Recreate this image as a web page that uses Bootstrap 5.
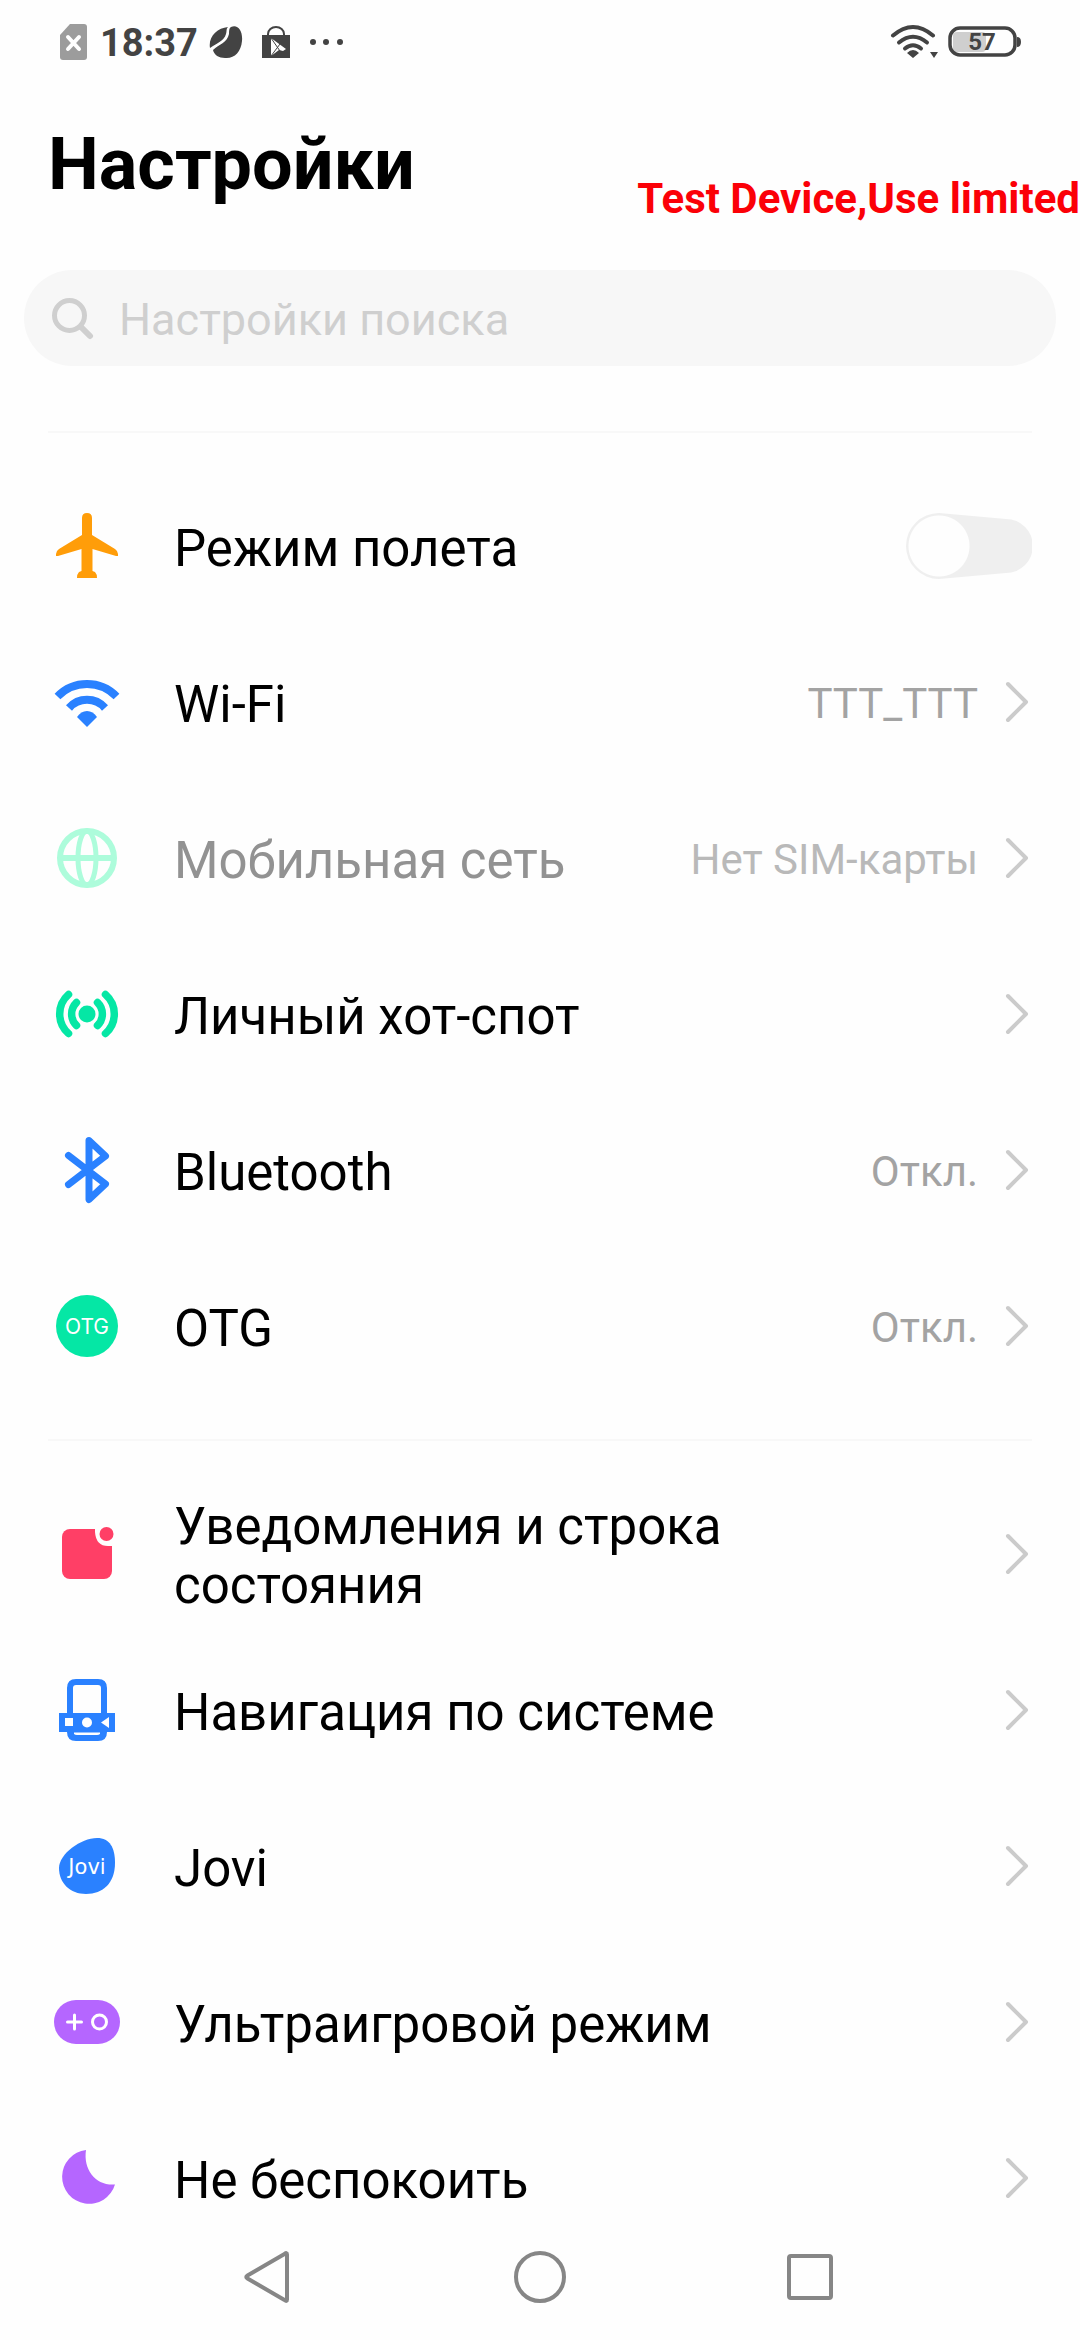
<!DOCTYPE html>
<html lang="ru">
<head>
<meta charset="utf-8">
<meta name="viewport" content="width=device-width, initial-scale=1">
<title>Настройки</title>
<link href="https://cdn.jsdelivr.net/npm/bootstrap@5.3.0/dist/css/bootstrap.min.css" rel="stylesheet">
<style>
  body { font-family: Roboto, "Noto Sans", sans-serif; background: #fefefe; color: #000; }
  svg { display: block; flex: none; }
  .status-bar { height: 84px; padding: 0 58px 0 60px; color: #434343; }
  .status-time { font-size: 38px; line-height: 48px; font-weight: 700; margin: 0 11px 0 13px; padding-top: 2px; }
  .page-head { height: 162px; padding: 0 48px; }
  .page-head h1 { font-size: 72px; line-height: 84px; font-weight: 700; }
  .watermark { top: 174px; right: 0; font-size: 42px; line-height: 50px; font-weight: 700; color: #fb0007; }
  .search-box { height: 96px; margin: 24px 24px 65px; padding: 0 26px; background: #f7f7f7; }
  .search-box input, .search-box input:focus { font-size: 45px; line-height: 54px; padding: 4px 0 0 25px; background: transparent; color: #000; box-shadow: none; }
  .search-box input::placeholder { color: #cfcfcf; opacity: 1; }
  .settings-group { margin: 0 48px; padding: 35px 0; border-top: 2px solid #f8f8f8; }
  .setting { min-height: 156px; color: #000; text-decoration: none; }
  .setting-label { font-size: 51px; line-height: 59px; margin-left: 48px; padding-top: 4px; max-width: 600px; }
  .setting-value { font-size: 42px; line-height: 50px; margin-right: 24px; padding-top: 4px; color: #a3a3a3; }
  .setting.is-off .setting-label { color: #929292; }
  .setting.is-off .setting-value { color: #b9b9b9; }
  .setting .form-check-input { width: 126px; height: 66px; margin: 0; border: 0; border-radius: 0;
    background: radial-gradient(circle at 33px 33px, #fefefe 30px, #efefef 31px);
    clip-path: path("M33 0 L100 6 A27 27 0 0 1 100 60 L33 66 A33 33 0 0 1 33 0 Z"); }
  .nav-keys { height: 126px; background: #fefefe; }
  .chev { fill: none; stroke: #cbcbcb; stroke-width: 4; stroke-linecap: round; stroke-linejoin: round; }
  .key-shape { fill: none; stroke: #868686; stroke-width: 4; stroke-linejoin: round; }
  .otg-mark { font: 21px Inter, sans-serif; }
  .jovi-mark { font: 21px "DejaVu Sans", sans-serif; }
</style>
<script src="https://cdn.jsdelivr.net/npm/bootstrap@5.3.0/dist/js/bootstrap.bundle.min.js"></script>
</head>
<body>
<svg class="d-none" aria-hidden="true"><symbol id="chevron" viewBox="0 0 30 42"><path class="chev" d="M6 3l18 18L6 39"/></symbol></svg>

<div class="status-bar d-flex align-items-center">
  <svg width="27" height="36" viewBox="0 0 27 36"><path fill="#9c9c9c" d="M10 0h14q3 0 3 3v30q0 3-3 3H3q-3 0-3-3V11Z"/><path stroke="#fff" stroke-width="4" stroke-linecap="round" d="M8 13l11 12M19 13L8 25"/></svg>
  <span class="status-time">18:37</span>
  <svg width="34" height="34" viewBox="0 0 34 34" fill="#434343"><path d="M19 2C8 3-1 12 1 23 8 18 15 16 17 9 18 6 17 4 19 2Z"/><path d="M22 2C29-1 34 6 33 16 32 27 25 34 16 33 10 33 5 30 4 25 10 19 18 18 20 9 20 6 20 3 22 2Z"/></svg>
  <svg class="ms-3" width="34" height="34" viewBox="0 0 34 34"><path fill="#434343" d="M3 10h28v23H3Z"/><path fill="none" stroke="#434343" stroke-width="2" d="M9 12V9a8 7 0 0 1 16 0v3"/><path fill="#fefefe" d="M12 13l15 11-3 2-4-1-8 6Z"/><path stroke="#434343" d="M12 13l9 13M12 31l9-12"/></svg>
  <svg class="ms-3" width="36" height="8" viewBox="0 0 36 8" fill="#434343"><circle cx="4" cy="4" r="3"/><circle cx="17" cy="4" r="3"/><circle cx="31" cy="4" r="3"/></svg>
  <svg class="ms-auto" width="48" height="36" viewBox="0 0 48 36"><g fill="none" stroke="#434343" stroke-width="4" stroke-linecap="round"><path d="M3 11.500Q23 -5.500 43 11.500"/><path d="M9 18.500Q23 7 37 18.500"/><path d="M15 24.500Q23 18 31 24.500"/></g><path fill="#434343" d="M17 29Q23 23 29 29L23 34ZM40 28h8l-4 6Z"/></svg>
  <svg class="ms-2" width="76" height="32" viewBox="0 0 76 32"><rect x="7" y="6" width="33" height="20" rx="4" fill="#cfcfcf"/><rect x="4" y="2" width="65" height="27" rx="10" fill="none" stroke="#434343" stroke-width="3.500"/><path d="M71 11q4 0 4 5t-4 5Z" fill="#434343"/><text x="36" y="24" text-anchor="middle" font-size="24" font-weight="700" fill="#434343">57</text></svg>
</div>

<header class="page-head d-flex align-items-center"><h1 class="m-0">Настройки</h1></header>
<div class="watermark position-absolute">Test Device,Use limited</div>

<form class="search-box d-flex align-items-center rounded-pill" role="search">
  <label for="q"><svg width="44" height="44" viewBox="0 0 44 44" fill="none" stroke="#cfcfcf" stroke-linecap="round" role="img" aria-label="Поиск"><circle cx="19.500" cy="19.500" r="15" stroke-width="5"/><path d="M31 31l9 9" stroke-width="6"/></svg></label>
  <input id="q" type="search" class="form-control border-0" placeholder="Настройки поиска">
</form>

<main>
  <section class="settings-group">
    <div class="setting d-flex align-items-center">
      <svg width="78" height="78" viewBox="0 0 78 78"><path fill="#ff9d09" d="M34 11Q34 6 39 6t5 5V28L67 42Q70 44 70 47V49H68L44.500 42V64L47 65Q49 67 49 71H29Q29 67 31 65L33.500 64V42L10 49H8V47Q8 44 11 42L34 28Z"/></svg>
      <label class="setting-label" for="air">Режим полета</label>
      <input id="air" type="checkbox" role="switch" class="form-check-input ms-auto">
    </div>
    <a href="#" class="setting d-flex align-items-center">
      <svg width="78" height="78" viewBox="0 0 78 78"><g fill="none" stroke="#2a81ff" stroke-width="8" stroke-linejoin="round"><path d="M9.500 33.500A41 41 0 0 1 68.500 33.500"/><path d="M21 45A24 24 0 0 1 57 45"/></g><path fill="#2a81ff" d="M29 54Q33 48 39 48t10 6L39 64Z"/></svg>
      <span class="setting-label">Wi-Fi</span><span class="setting-value ms-auto">TTT_TTT</span><svg width="30" height="42"><use href="#chevron"/></svg>
    </a>
    <a href="#" class="setting is-off d-flex align-items-center" aria-disabled="true">
      <svg width="78" height="78" viewBox="0 0 78 78" fill="none" stroke="#adfcdb" stroke-width="6"><circle cx="39" cy="39" r="27"/><ellipse cx="39" cy="39" rx="9" ry="27" stroke-width="5"/><path d="M12 39h54"/></svg>
      <span class="setting-label">Мобильная сеть</span><span class="setting-value ms-auto">Нет SIM-карты</span><svg width="30" height="42"><use href="#chevron"/></svg>
    </a>
    <a href="#" class="setting d-flex align-items-center">
      <svg width="78" height="78" viewBox="0 0 78 78"><circle cx="39" cy="39" r="8.500" fill="#05e7a5"/><g fill="none" stroke="#05e7a5" stroke-width="7.500" stroke-linecap="round"><path d="M20.500 19.500A26 26 0 0 0 20.500 58.500M57.500 19.500A26 26 0 0 1 57.500 58.500"/><path d="M28.500 27.500A16 16 0 0 0 28.500 50.500M49.500 27.500A16 16 0 0 1 49.500 50.500"/></g></svg>
      <span class="setting-label">Личный хот-спот</span><svg class="ms-auto" width="30" height="42"><use href="#chevron"/></svg>
    </a>
    <a href="#" class="setting d-flex align-items-center">
      <svg width="78" height="78" viewBox="0 0 78 78"><path fill="none" stroke="#2a81ff" stroke-width="7" stroke-linecap="round" stroke-linejoin="round" d="M20.500 24.500L57.500 53 41 68.500V9.500L57.500 25 20.500 53.500"/></svg>
      <span class="setting-label">Bluetooth</span><span class="setting-value ms-auto">Откл.</span><svg width="30" height="42"><use href="#chevron"/></svg>
    </a>
    <a href="#" class="setting d-flex align-items-center">
      <svg width="78" height="78" viewBox="0 0 78 78"><circle cx="39" cy="39" r="31" fill="#05e7a5"/><text class="otg-mark" x="39" y="47" text-anchor="middle" fill="#fff">OTG</text></svg>
      <span class="setting-label">OTG</span><span class="setting-value ms-auto">Откл.</span><svg width="30" height="42"><use href="#chevron"/></svg>
    </a>
  </section>

  <section class="settings-group">
    <a href="#" class="setting d-flex align-items-center">
      <svg width="78" height="78" viewBox="0 0 78 78"><rect x="14" y="14" width="50" height="50" rx="8" fill="#ff3f66"/><path d="M47 10V17Q48 31 60 31H70V10Z" fill="#fefefe"/><circle cx="58.500" cy="19" r="7" fill="#ff3f66"/></svg>
      <span class="setting-label">Уведомления и строка состояния</span><svg class="ms-auto" width="30" height="42"><use href="#chevron"/></svg>
    </a>
    <a href="#" class="setting d-flex align-items-center">
      <svg width="78" height="78" viewBox="0 0 78 78"><path fill="#2a81ff" fill-rule="evenodd" d="M28 8H50Q59 8 59 17V42H67V61H59Q59 70 50 70H28Q19 70 19 61H11V42H19V17Q19 8 28 8ZM28 14Q25 14 25 17V42H53V17Q53 14 50 14Z"/><path fill="#fefefe" d="M17 47h8v8h-8ZM61 46v11l-8-5.500ZM26 61.500H52V63Q51 64 49 64H29Q27 64 26 63Z"/><circle cx="39" cy="51.500" r="5" fill="#fefefe"/></svg>
      <span class="setting-label">Навигация по системе</span><svg class="ms-auto" width="30" height="42"><use href="#chevron"/></svg>
    </a>
    <a href="#" class="setting d-flex align-items-center">
      <svg width="78" height="78" viewBox="0 0 78 78"><path fill="#2a81ff" d="M49 11C62 11 67 21 67 36 67 56 55 67 38 67 22 67 11 56 11 41 11 27 33 11 49 11Z"/><text class="jovi-mark" x="39" y="47" text-anchor="middle" fill="#fff">Jovi</text></svg>
      <span class="setting-label">Jovi</span><svg class="ms-auto" width="30" height="42"><use href="#chevron"/></svg>
    </a>
    <a href="#" class="setting d-flex align-items-center">
      <svg width="78" height="78" viewBox="0 0 78 78"><rect x="6" y="17" width="66" height="44" rx="22" fill="#b566ff"/><g fill="none" stroke="#fff" stroke-width="3" stroke-linecap="round"><path d="M19.500 39h14M26.500 32v14"/><circle cx="51.500" cy="39" r="7"/></g></svg>
      <span class="setting-label">Ультраигровой режим</span><svg class="ms-auto" width="30" height="42"><use href="#chevron"/></svg>
    </a>
    <a href="#" class="setting d-flex align-items-center">
      <svg width="78" height="78" viewBox="0 0 78 78"><path fill="#b566ff" d="M38 11A27 27 0 1 0 67 45.500C48 47 35 31 38 11Z"/></svg>
      <span class="setting-label">Не беспокоить</span><svg class="ms-auto" width="30" height="42"><use href="#chevron"/></svg>
    </a>
  </section>
</main>

<nav class="nav-keys fixed-bottom">
  <div class="row g-0 h-100 justify-content-center">
    <button type="button" class="btn border-0 rounded-0 col-3 d-flex align-items-center justify-content-center" aria-label="Назад"><svg width="54" height="54" viewBox="0 0 54 54"><path class="key-shape" d="M44 4.500Q44 2 41.500 4L4.500 25.500Q2 27 4.500 28.500L41.500 50Q44 52 44 49.500Z"/></svg></button>
    <button type="button" class="btn border-0 rounded-0 col-3 d-flex align-items-center justify-content-center" aria-label="Домой"><svg width="54" height="54" viewBox="0 0 54 54"><circle class="key-shape" cx="27" cy="27" r="24"/></svg></button>
    <button type="button" class="btn border-0 rounded-0 col-3 d-flex align-items-center justify-content-center" aria-label="Недавние"><svg width="54" height="54" viewBox="0 0 54 54"><rect class="key-shape" x="6" y="6" width="42" height="42" rx="2"/></svg></button>
  </div>
</nav>
</body>
</html>
